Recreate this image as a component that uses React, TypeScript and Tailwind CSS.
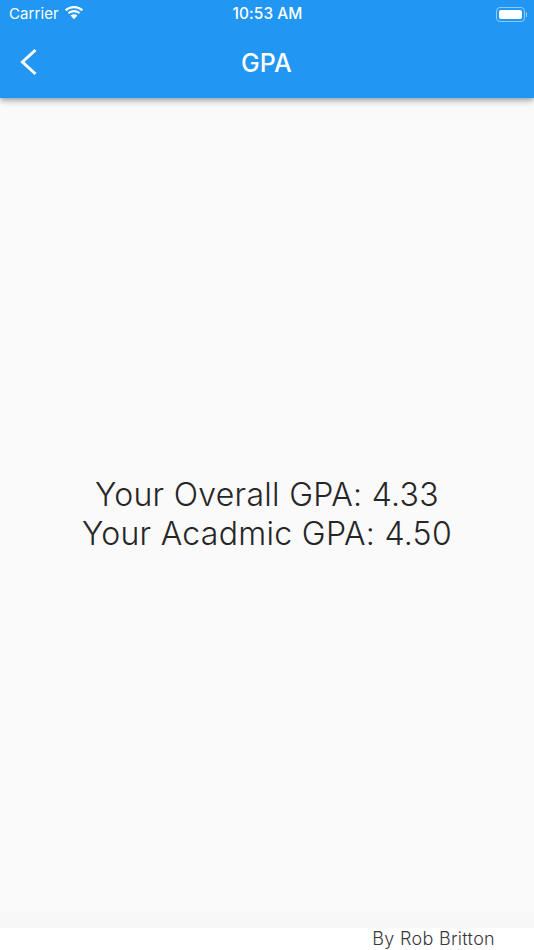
export default function App() {
  return (
    <div className="w-[534px] h-[950px] flex flex-col bg-white overflow-hidden font-['Inter','Liberation_Sans',sans-serif]">
      <header className="relative z-10 h-[98px] shrink-0 bg-[#2196f3] text-white flex flex-col shadow-[0_2px_4px_-1px_rgba(0,0,0,0.2),0_4px_5px_0_rgba(0,0,0,0.14),0_1px_10px_0_rgba(0,0,0,0.12)]">
        <div className="h-[28px] shrink-0 grid grid-cols-3 items-center pl-[9px] pr-[7px]">
          <div className="flex items-center gap-[5px]">
            <span className="text-[15px] leading-[28px] tracking-[0.1px] font-normal">Carrier</span>
            <svg className="mb-[1px]" width="20" height="15" viewBox="0 0 20 15" fill="white">
              <path d="M10 2.200c3 0 5.600 1.100 7.600 3l1.500-1.600C16.700 1.300 13.500 0 10 0S3.300 1.300.9 3.600l1.500 1.600c2-1.900 4.600-3 7.600-3z" />
              <path d="M10 6.300c1.900 0 3.500.7 4.800 1.800l1.500-1.600C14.600 5 12.400 4.100 10 4.100s-4.600.9-6.300 2.400l1.500 1.600C6.500 7 8.100 6.300 10 6.300z" />
              <path d="M10 8.200c-1.300 0-2.500.5-3.400 1.300L10 13.200l3.400-3.700c-.9-.8-2.100-1.300-3.400-1.300z" />
            </svg>
          </div>
          <div className="text-center text-[15.400px] leading-[28px] font-medium tracking-[0.1px] pr-[1px]">10:53 AM</div>
          <div className="flex justify-end items-center">
            <div className="w-[29px] h-[15px] rounded-[4px] border border-[#8ecbf9] p-[2px]">
              <div className="w-full h-full rounded-[2px] bg-white" />
            </div>
            <div className="w-[1.500px] h-[5px] ml-[1px] rounded-r-sm bg-[#8ecbf9]" />
          </div>
        </div>
        <div className="relative flex-1 flex items-center justify-center">
          <svg className="absolute left-[19px] top-[20px]" width="20" height="28" viewBox="0 0 20 28" fill="none" stroke="white" strokeWidth="3">
            <path d="M16.500 2 L3.500 14 L16.500 26" />
          </svg>
          <h1 className="text-[25px] leading-[32px] font-[450] tracking-[0.1px] pb-[1px] pr-[1px]">GPA</h1>
        </div>
      </header>
      <main className="relative flex-1 bg-[#fafafa] flex flex-col items-center justify-center text-[#262626] text-[32px] leading-[39px] font-[350] tracking-[0.3px] pt-[2px]">
        <p>Your Overall GPA: 4.33</p>
        <p>Your Acadmic GPA: 4.50</p>
        <div className="absolute left-0 right-0 bottom-0 h-[24px] bg-gradient-to-b from-[#fafafa] to-[#f7f7f7]" />
      </main>
      <footer className="h-[22px] shrink-0 bg-white flex justify-end pr-[39px] text-[#3a3a3a] text-[18px] leading-[22px] font-[350] tracking-[0.3px]">
        By Rob Britton
      </footer>
    </div>
  );
}
